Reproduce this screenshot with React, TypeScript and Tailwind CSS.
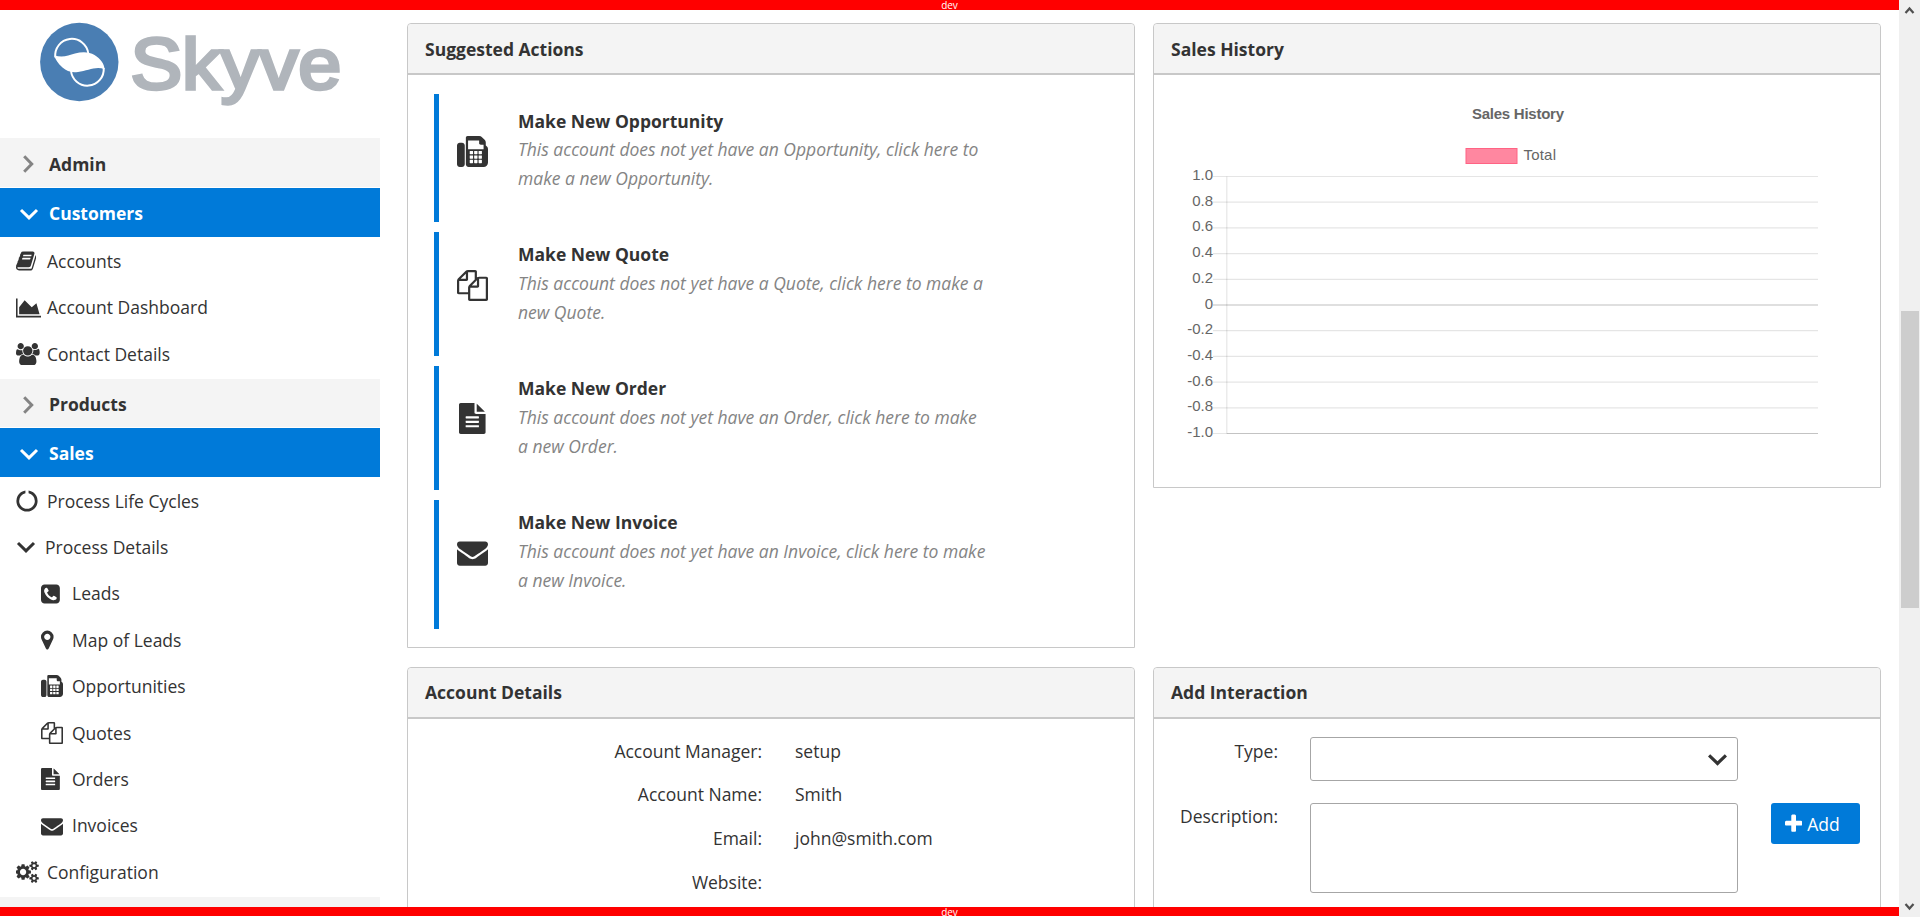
import type { ReactNode } from "react";

type Glyph = { x: number; w: number; d: string };

const key = (x: number, y: number) =>
  `M${x} ${y}v-128q0-14-9-23t-23-9h-128q-14 0-23 9t-9 23v128q0 14 9 23t23 9h128q14 0 23-9t9-23z`;

const keypad = [928, 1184, 1440]
  .map((x) => [1536, 1280, 1024].map((y) => key(x, y)).join(""))
  .join("");

const cog =
  "q0 16-149 31-12 27-30 52 51 113 51 138 0 4-4 7-122 71-124 71-8 0-46-47t-52-68q-20 2-30 2t-30-2q-14 21-52 68t-46 47q-2 0-124-71-4-3-4-7 0-25 51-138-18-25-30-52-149-15-149-31v-140q0-16 149-31 13-29 30-52-51-113-51-138 0-4 4-7 4-2 35-20t59-34 30-16q8 0 46 46.5t52 67.5q20-2 30-2t30 2q51-71 92-112l6-2q4 0 124 70 4 3 4 7 0 25-51 138 17 23 30 52 149 15 149 31z";

const glyphs: Record<string, Glyph> = {
  book: {
    x: 64,
    w: 1664,
    d: "M1703 478q40 57 18 129l-275 906q-19 64-76.5 107.5t-122.5 43.5h-923q-77 0-148.5-53.5t-99.5-131.5q-24-67-2-127 0-4 3-27t4-37q1-8-3-21.5t-3-19.5q2-11 8-21t16.5-23.5 16.5-23.5q23-38 45-91.5t30-91.5q3-10 .5-30t-.5-28q3-11 17-28t17-23q21-36 42-92t25-90q1-9-2.5-32t.5-28q4-13 22-30.5t22-22.5q19-26 42.5-84.5t27.5-96.5q1-8-3-25.5t-2-26.5q2-8 9-18t18-23 17-21q8-12 16.5-30.5t15-35 16-36 19.5-32 26.5-23.5 36-11.5 47.5 5.5l-1 3q38-9 51-9h761q74 0 114 56t18 130l-274 906q-36 119-71.5 153.5t-128.5 34.5h-869q-27 0-38 15-11 16-1 43 24 70 144 70h923q29 0 56-15.5t35-41.5l300-987q7-22 5-57 38 15 59 43zm-1064 2q-4 13 2 22.5t20 9.5h608q13 0 25.5-9.5t16.5-22.5l21-64q4-13-2-22.5t-20-9.5h-608q-13 0-25.5 9.5t-16.5 22.5zm-83 256q-4 13 2 22.5t20 9.5h608q13 0 25.5-9.5t16.5-22.5l21-64q4-13-2-22.5t-20-9.5h-608q-13 0-25.5 9.5t-16.5 22.5z",
  },
  chart: {
    x: 0,
    w: 2048,
    d: "M2048 1536v128h-2048v-1536h128v1408h1920zm-384-1024l256 896h-1664v-576l448-576 576 576z",
  },
  users: {
    x: 64,
    w: 1920,
    d: "M657 896q-162 5-265 128h-134q-82 0-138-40.5t-56-118.5q0-353 124-353 6 0 43.5 21t97.5 42.5 119 21.5q67 0 133-23-5 37-5 66 0 159 92 290zm1071 637q0 120-73 189.5t-194 69.5h-874q-121 0-194-69.5t-73-189.5q0-53 3.5-103.5t14-109 26.5-108.5 43-97.5 62-81 85.5-53.5 111.5-20q10 0 43 21.5t73 48 107 48 135 21.5 135-21.5 107-48 73-48 43-21.5q61 0 111.5 20t85.5 53.5 62 81 43 97.5 26.5 108.5 14 109 3.5 103.5zm-1024-1277q0 106-75 181t-181 75-181-75-75-181 75-181 181-75 181 75 75 181zm704 384q0 159-112.5 271.5t-271.5 112.5-271.5-112.5-112.5-271.5 112.5-271.5 271.5-112.5 271.5 112.5 112.5 271.5zm576 225q0 78-56 118.5t-138 40.5h-134q-103-123-265-128 92-131 92-290 0-29-5-66 66 23 133 23 59 0 119-21.5t97.5-42.5 43.5-21q124 0 124 353zm-128-609q0 106-75 181t-181 75-181-75-75-181 75-181 181-75 181 75 75 181z",
  },
  notch: {
    x: 0,
    w: 1792,
    d: "M1760 896q0 176-68.5 336t-184 275.5-275.5 184-336 68.5-336-68.5-275.5-184-184-275.5-68.5-336q0-213 97-398.5t265-305.5 374-151v228q-221 45-366.5 221t-145.5 406q0 130 51 248.5t136.5 204 204 136.5 248.5 51 248.5-51 204-136.5 136.5-204 51-248.5q0-230-145.5-406t-366.5-221v-228q206 31 374 151t265 305.5 97 398.5z",
  },
  phone: {
    x: 128,
    w: 1536,
    d: "M1408 1193q0-11-2-16t-18-16.5-40.5-25-47.5-26.5-45.5-25-28.5-15q-5-3-19-13t-25-15-21-5q-15 0-36.5 20.5t-39.5 45-38.5 45-33.5 20.5q-7 0-16.5-3.5t-15.5-6.5-17-9.5-14-8.5q-99-55-170-126.5t-127-170.5q-2-3-8.5-14t-9.5-17-6.5-15.5-3.5-16.5q0-13 20.5-33.5t45-38.5 45-39.5 20.5-36.5q0-10-5-21t-15-25-13-19q-3-6-15-28.5t-25-45.5-26.5-47.5-25-40.5-16.5-18-16-2q-48 0-101 22-46 21-80 94.5t-34 130.5q0 16 2.5 34t5 30.5 9 33 10 29.5 12.5 33 11 30q60 164 216.5 320.5t320.5 216.5q6 2 30 11t33 12.5 29.5 10 33 9 30.5 5 34 2.5q57 0 130.5-34t94.5-80q22-53 22-101zm256-777v960q0 119-84.5 203.5t-203.5 84.5h-960q-119 0-203.5-84.5t-84.5-203.5v-960q0-119 84.5-203.5t203.5-84.5h960q119 0 203.5 84.5t84.5 203.5z",
  },
  marker: {
    x: 384,
    w: 1024,
    d: "M1152 640q0-106-75-181t-181-75-181 75-75 181 75 181 181 75 181-75 75-181zm256 0q0 109-33 179l-364 774q-16 33-47.5 52t-67.5 19-67.5-19-46.5-52l-365-774q-33-70-33-179 0-212 150-362t362-150 362 150 150 362z",
  },
  fax: {
    x: 0,
    w: 1792,
    d:
      "M288 384q66 0 113 47t47 113v1088q0 66-47 113t-113 47h-128q-66 0-113-47t-47-113v-1088q0-66 47-113t113-47h128zM1664 547q58 34 93 93t35 128v768q0 106-75 181t-181 75h-864q-66 0-113-47t-47-113v-1536q0-40 28-68t68-28h672q40 0 88 20t76 48l152 152q28 28 48 76t20 88v163zM1536 768v-256h-160q-40 0-68-28t-28-68v-160h-640v512h896z" +
      keypad,
  },
  files: {
    x: 0,
    w: 1792,
    d: "M1696 384q40 0 68 28t28 68v1216q0 40-28 68t-68 28h-960q-40 0-68-28t-28-68v-288h-544q-40 0-68-28t-28-68v-672q0-40 20-88t48-76l408-408q28-28 76-48t88-20h416q40 0 68 28t28 68v328q68-40 128-40h416zm-544 213l-299 299h299v-299zm-640-384l-299 299h299v-299zm196 647l316-316v-416h-384v416q0 40-28 68t-68 28h-416v640h512v-256q0-40 20-88t48-76zm956 804v-1152h-384v416q0 40-28 68t-68 28h-416v640h896z",
  },
  file: {
    x: 128,
    w: 1536,
    d: "M1596 476q14 14 28 36h-472v-472q22 14 36 28zm-476 164h544v1056q0 40-28 68t-68 28h-1344q-40 0-68-28t-28-68v-1600q0-40 28-68t68-28h800v544q0 40 28 68t68 28zm160 736v-64q0-14-9-23t-23-9h-704q-14 0-23 9t-9 23v64q0 14 9 23t23 9h704q14 0 23-9t9-23zm0-256v-64q0-14-9-23t-23-9h-704q-14 0-23 9t-9 23v64q0 14 9 23t23 9h704q14 0 23-9t9-23zm0-256v-64q0-14-9-23t-23-9h-704q-14 0-23 9t-9 23v64q0 14 9 23t23 9h704q14 0 23-9t9-23z",
  },
  envelope: {
    x: 0,
    w: 1792,
    d: "M1792 710v794q0 66-47 113t-113 47h-1472q-66 0-113-47t-47-113v-794q44 49 101 87 362 246 497 345 57 42 92.5 65.5t94.5 48 110 24.5h2q51 0 110-24.5t94.5-48 92.5-65.5q170-123 498-345 57-39 100-87zm0-294q0 79-49 151t-122 123q-376 261-468 325-10 7-42.5 31t-54 38.5-52 32.5-57.5 27-50 9h-2q-23 0-50-9t-57.5-27-52-32.5-54-38.5-42.5-31q-91-64-262-182.5t-205-142.5q-62-42-117-115.5t-55-136.5q0-78 41.5-130t118.5-52h1472q65 0 112.5 47t47.5 113z",
  },
  cogs: {
    x: 0,
    w: 1920,
    d:
      "M832 896q0-106-75-181t-181-75-181 75-75 181 75 181 181 75 181-75 75-181zm768 512q0-52-38-90t-90-38-90 38-38 90q0 53 37.5 90.5t90.5 37.5 90.5-37.5 37.5-90.5zm0-1024q0-52-38-90t-90-38-90 38-38 90q0 53 37.5 90.5t90.5 37.5 90.5-37.5 37.5-90.5zm-384 421v185q0 10-7 19.5t-16 10.5l-155 24q-11 35-32 76 34 48 90 115 7 11 7 20 0 12-7 19-23 30-82.5 89.5t-78.5 59.5q-11 0-21-7l-115-90q-37 19-77 31-11 108-23 155-7 24-30 24h-186q-11 0-20-7.5t-10-17.5l-23-153q-34-10-75-31l-118 89q-7 7-20 7-11 0-21-8-144-133-144-160 0-9 7-19 10-14 41-53t47-61q-23-44-35-82l-152-24q-10-1-17-9.5t-7-19.5v-185q0-10 7-19.5t16-10.5l155-24q11-35 32-76-34-48-90-115-7-11-7-20 0-12 7-20 22-30 82-89t79-59q11 0 21 7l115 90q34-18 77-32 11-108 23-154 7-24 30-24h186q11 0 20 7.5t10 17.5l23 153q34 10 75 31l118-89q8-7 20-7 11 0 21 8 144 133 144 160 0 8-7 19-12 16-42 54t-45 60q23 48 34 82l152 23q10 2 17 10.5t7 19.5zM1856 1338v140" +
      cog +
      "M1856 314v140" +
      cog,
  },
  plus: {
    x: 192,
    w: 1408,
    d: "M1600 736v192q0 40-28 68t-68 28h-416v416q0 40-28 68t-68 28h-192q-40 0-68-28t-28-68v-416h-416q-40 0-68-28t-28-68v-192q0-40 28-68t68-28h416v-416q0-40 28-68t68-28h192q40 0 68 28t28 68v416h416q40 0 68 28t28 68z",
  },
};

function Icon({ name, className }: { name: string; className: string }) {
  const g = glyphs[name];
  return (
    <svg
      viewBox={`${g.x} 0 ${g.w} 1792`}
      className={`block w-auto shrink-0 ${className}`}
      fill="currentColor"
      fillRule="evenodd"
      aria-hidden="true"
    >
      <path d={g.d} />
    </svg>
  );
}

function Chevron({ dir, className }: { dir: "right" | "down"; className: string }) {
  return (
    <svg viewBox="0 0 20 20" className={`block shrink-0 ${className}`} fill="none" stroke="currentColor" strokeWidth="3">
      {dir === "right" ? <path d="M5.2 2.3 12.7 10 5.2 17.7" /> : <path d="M2 6 10 13.8 18 6" />}
    </svg>
  );
}

function Logo() {
  return (
    <svg width="380" height="128" className="block" role="img" aria-label="Skyve">
      <circle cx="79.3" cy="52" r="39.2" fill="#4a7eb3" />
      <path d="M55.3 47.5A16.4 16.4 0 1 1 88.3 43.5" fill="none" stroke="#fff" strokeWidth="2" />
      <path d="M103.7 58A16.2 16.2 0 1 1 71 60.5" fill="none" stroke="#fff" strokeWidth="2" />
      <path
        d="M54.3 45.6C63 47.6 68 45.8 75 43.6C82 41.5 89 41.6 94.5 45C100.5 48.5 104.3 54 104.6 59.2C96 55.6 88 60.6 78 62C71 62.8 67 61.5 62.5 57.6C58 53.6 55 49 54.3 45.6Z"
        fill="#fff"
      />
      <text
        x="130.4"
        y="79.4"
        textLength="211"
        lengthAdjust="spacingAndGlyphs"
        fontSize="73"
        fill="#b0b5bb"
        stroke="#b0b5bb"
        strokeWidth="3.4"
        className="font-['Liberation_Sans',sans-serif]"
      >
        Skyve
      </text>
    </svg>
  );
}

function Group({ label, open = false, className = "h-[49px]" }: { label: string; open?: boolean; className?: string }) {
  return (
    <div
      className={
        open
          ? `mt-px flex items-center gap-2.5 bg-[#007ad9] pl-[19px] pt-0.5 font-bold text-white ${className}`
          : `flex items-center gap-2.5 bg-[#f4f4f4] pl-[19px] pt-[3px] font-bold ${className}`
      }
    >
      <Chevron dir={open ? "down" : "right"} className={open ? "size-5" : "size-5 text-[#848484]"} />
      <span>{label}</span>
    </div>
  );
}

function Item({ icon, label, sub = false }: { icon: string; label: string; sub?: boolean }) {
  return (
    <li className={sub ? "flex h-[46.4px] items-center pl-[41px]" : "flex h-[46.4px] items-center pl-4"}>
      <span className="w-[31px]">
        <Icon name={icon} className="h-[22px]" />
      </span>
      <span>{label}</span>
    </li>
  );
}

function Card({ title, className, pad = "pt-px", children }: { title: string; className: string; pad?: string; children: ReactNode }) {
  return (
    <section className={`w-[728px] rounded-t border border-[#c8c8c8] ${className}`}>
      <h2 className={`flex h-[51px] items-center rounded-t border-b-2 border-[#c8c8c8] bg-[#f4f4f4] pl-[17px] font-bold ${pad}`}>
        {title}
      </h2>
      {children}
    </section>
  );
}

const actions = [
  { icon: "fax", name: "Opportunity", text: "This account does not yet have an Opportunity, click here to make a new Opportunity.", box: "h-32", pad: "pt-[13px]", ipad: "pt-[42px]", lead: "leading-7" },
  { icon: "files", name: "Quote", text: "This account does not yet have a Quote, click here to make a new Quote.", box: "h-[124px]", pad: "pt-2", ipad: "pt-[38px]", lead: "leading-[29px]" },
  { icon: "file", name: "Order", text: "This account does not yet have an Order, click here to make a new Order.", box: "h-[124px]", pad: "pt-2", ipad: "pt-[37px]", lead: "leading-[29px]" },
  { icon: "envelope", name: "Invoice", text: "This account does not yet have an Invoice, click here to make a new Invoice.", box: "h-[129px]", pad: "pt-2", ipad: "pt-[37px]", lead: "leading-[29px]" },
];

const ticks = ["1.0", "0.8", "0.6", "0.4", "0.2", "0", "-0.2", "-0.4", "-0.6", "-0.8", "-1.0"];

function SalesChart() {
  return (
    <svg width="726" height="412" className="block font-['Liberation_Sans',sans-serif] text-[15px]">
      <text x="364" y="44" textAnchor="middle" textLength="92" fontWeight="bold" fill="#666">
        Sales History
      </text>
      <rect x="312" y="73.5" width="51" height="15" fill="#ff87a0" stroke="#ff6384" />
      <text x="369.5" y="85" textLength="32.5" fill="#666">
        Total
      </text>
      {ticks.map((t, i) => {
        const y = 101.5 + i * 25.7;
        return (
          <g key={t}>
            <line x1="59" x2="664" y1={y} y2={y} stroke="#000" strokeOpacity={t === "0" ? 0.25 : 0.1} strokeWidth="1.2" />
            <text x="59" y={Math.round(y + 3.5)} textAnchor="end" fill="#666">
              {t}
            </text>
          </g>
        );
      })}
      <line x1="72.8" x2="72.8" y1="101.5" y2="358.5" stroke="#000" strokeOpacity="0.1" strokeWidth="1.2" />
      <line x1="72.8" x2="664" y1="358.5" y2="358.5" stroke="#000" strokeOpacity="0.15" strokeWidth="1.2" />
    </svg>
  );
}

const details = [
  ["Account Manager:", "setup"],
  ["Account Name:", "Smith"],
  ["Email:", "john@smith.com"],
  ["Website:", ""],
];

export default function App() {
  return (
    <div className="flex h-[917px] w-[1920px] overflow-hidden bg-white font-['Open_Sans',sans-serif] text-[17.5px] text-[#333]">
      <div className="flex h-[917px] w-[1899px] flex-col">
        <div className="h-2.5 shrink-0 bg-[#f00] text-center text-[10px] leading-[11px] text-white">dev</div>
        <div className="flex h-[897px] shrink-0 overflow-hidden">
          <nav className="w-[380px] shrink-0">
            <Logo />
            <Group label="Admin" />
            <Group label="Customers" open />
            <ul className="h-[142px] pt-px">
              <Item icon="book" label="Accounts" />
              <Item icon="chart" label="Account Dashboard" />
              <Item icon="users" label="Contact Details" />
            </ul>
            <Group label="Products" className="h-12" />
            <Group label="Sales" open />
            <ul className="h-[420px] pt-[0.6px]">
              <Item icon="notch" label="Process Life Cycles" />
              <li className="flex h-[46.4px] items-center gap-[9px] pl-4">
                <Chevron dir="down" className="size-5" />
                <span>Process Details</span>
              </li>
              <Item icon="phone" label="Leads" sub />
              <Item icon="marker" label="Map of Leads" sub />
              <Item icon="fax" label="Opportunities" sub />
              <Item icon="files" label="Quotes" sub />
              <Item icon="file" label="Orders" sub />
              <Item icon="envelope" label="Invoices" sub />
              <Item icon="cogs" label="Configuration" />
            </ul>
            <div className="h-2.5 bg-[#f4f4f4]" />
          </nav>
          <main className="ml-[27px] mt-[13px] grid grid-cols-[728px_728px] content-start items-start gap-x-[18px] gap-y-[19px]">
            <Card title="Suggested Actions" className="h-[625px]" pad="pt-0.5">
              <div className="flex flex-col gap-2.5 pl-[26px] pt-[19px]">
                {actions.map((a) => (
                  <div key={a.name} className={`flex border-l-5 border-[#007ad9] ${a.box}`}>
                    <span className={`flex w-[67px] justify-center ${a.ipad}`}>
                      <Icon name={a.icon} className="h-[31px]" />
                    </span>
                    <div className={`w-[482px] pl-3 ${a.pad}`}>
                      <h3 className={`font-bold ${a.lead}`}>Make New {a.name}</h3>
                      <p className="italic leading-[28.8px] text-[#848484]">{a.text}</p>
                    </div>
                  </div>
                ))}
              </div>
            </Card>
            <Card title="Sales History" className="h-[465px]" pad="pt-0.5">
              <SalesChart />
            </Card>
            <Card title="Account Details" className="h-[300px]" pad="pt-0">
              <dl className="grid grid-cols-[354px_1fr] gap-x-[33px] pt-[10.6px] leading-[43.75px]">
                {details.map(([k, v]) => (
                  <div key={k} className="col-span-2 grid grid-cols-subgrid">
                    <dt className="text-right">{k}</dt>
                    <dd>{v}</dd>
                  </div>
                ))}
              </dl>
            </Card>
            <Card title="Add Interaction" className="h-[300px]" pad="pt-0">
              <div className="grid grid-cols-[124px_428px_89px] items-start gap-x-[33px] gap-y-[22px] pt-[18px] leading-[29px]">
                <label className="text-right">Type:</label>
                <div className="-ml-px mr-px flex h-11 items-center justify-end rounded-[3px] border border-[#a6a6a6] pr-[9px]">
                  <Chevron dir="down" className="size-[21px]" />
                </div>
                <span />
                <label className="-mt-px text-right">Description:</label>
                <textarea className="-ml-px mr-px h-[90px] resize-none rounded-[3px] border border-[#a6a6a6]" />
                <button className="-ml-px mr-px flex h-[41px] items-center gap-[5px] rounded-[3px] bg-[#007ad9] pl-3.5 text-white">
                  <Icon name="plus" className="h-[22px]" />
                  <span className="pt-0.5">Add</span>
                </button>
              </div>
            </Card>
          </main>
        </div>
        <div className="h-[9px] shrink-0 bg-[#f00] text-center text-[10px] leading-[11px] text-white">dev</div>
      </div>
      <div className="flex h-[917px] w-[21px] flex-col items-end bg-[#f0f0f0]">
        <svg width="20" height="311" className="block" fill="none" stroke="#505050" strokeWidth="2.2">
          <path d="M5.5 13 9.5 8.5 13.5 13" />
        </svg>
        <div className="mr-px h-[297px] w-[18px] bg-[#cdcdcd]" />
        <svg width="20" height="309" className="block" fill="none" stroke="#505050" strokeWidth="2.2">
          <path d="M5.5 296 9.5 300.5 13.5 296" />
        </svg>
      </div>
    </div>
  );
}
